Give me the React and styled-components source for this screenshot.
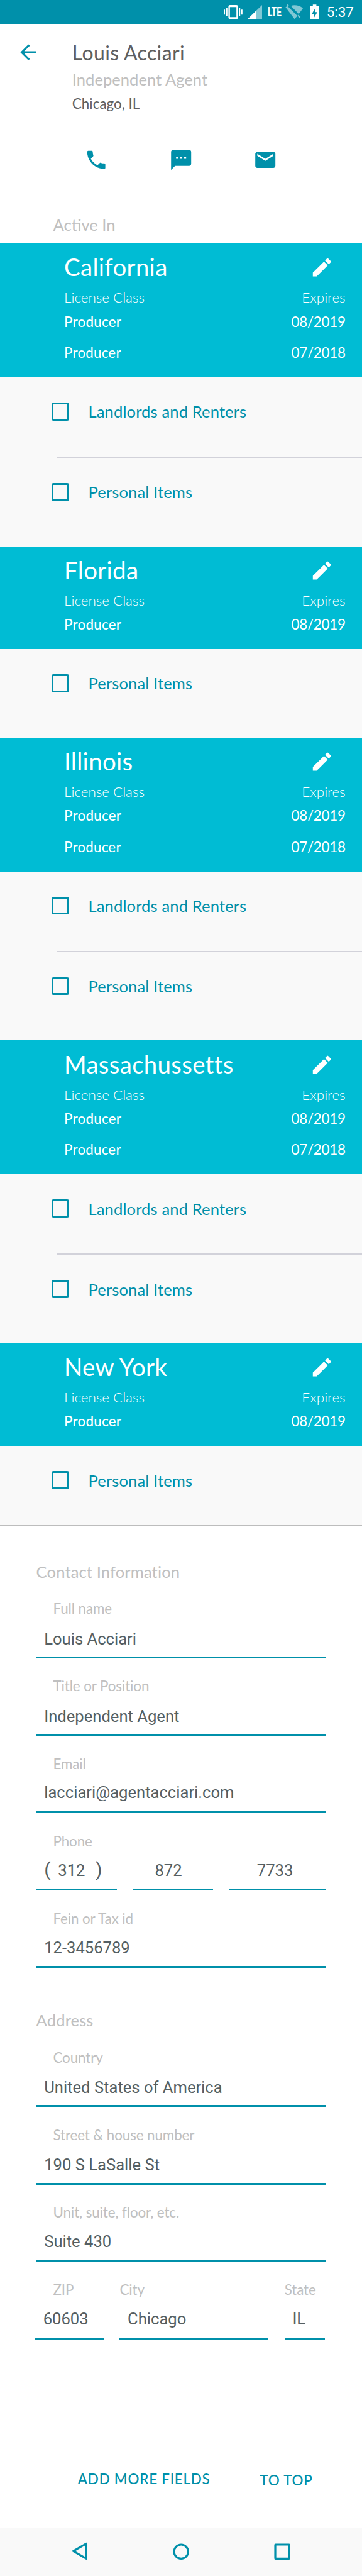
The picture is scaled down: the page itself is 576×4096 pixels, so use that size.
import React from "react";
import styled, { createGlobalStyle } from "styled-components";

// The screen is laid out on a 360dp wide grid.
const dp = (n) => `${Math.round(n * 1600) / 1000}px`;

const teal = "#0090aa";
const cyan = "#00bcd4";
const grey = "#c0c0c0";
const lato = `Lato, "Open Sans", sans-serif`;
const roboto = `Roboto, "Liberation Sans", sans-serif`;

const GlobalStyle = createGlobalStyle`
  * { box-sizing: border-box; }
  body { margin: 0; background: #fff; }
`;

const Screen = styled.div`
  width: 100%;
  height: ${dp(2560)};
  display: flex;
  flex-direction: column;
  background: #fff;
  font-family: ${lato};
  overflow: hidden;
`;

const StatusBar = styled.header`
  flex: none;
  height: ${dp(24)};
  background: ${teal};
  display: flex;
  align-items: center;
  justify-content: flex-end;
  padding-right: ${dp(8.25)};
  color: #fff;
  font-family: ${roboto};
  svg { flex: none; display: block; }
`;

const Network = styled.span`
  flex: none;
  width: ${dp(17.4)};
  margin-left: ${dp(5.4)};
  font-size: ${dp(12.6)};
  line-height: ${dp(24)};
  font-weight: 700;
  transform: scaleX(0.67);
  transform-origin: left center;
`;

const Battery = styled.span`
  flex: none;
  margin-left: ${dp(7.2)};
`;

const Clock = styled.time`
  font-size: ${dp(14)};
  line-height: ${dp(24)};
  margin-left: ${dp(7)};
`;

const Profile = styled.section`
  flex: none;
  height: ${dp(218)};
  padding: ${dp(12)} 0 0 ${dp(16)};
`;

const ProfileTop = styled.div`
  display: flex;
  gap: ${dp(31.8)};
  height: ${dp(94)};
  padding-top: ${dp(4)};
  svg { flex: none; display: block; }
`;

const Identity = styled.div`
  margin-top: ${dp(-0.6)};
`;

const Line = styled.div`
  font-size: ${(p) => dp(p.$size)};
  line-height: ${(p) => dp(p.$line)};
  letter-spacing: ${(p) => dp(p.$spacing || 0)};
  color: ${(p) => p.$color};
  white-space: nowrap;
`;

const Actions = styled.div`
  display: flex;
  gap: ${dp(60)};
  padding: ${dp(17)} 0 0 ${dp(68)};
  svg { display: block; }
`;

const ActiveHeading = styled.h2`
  margin: ${dp(41.9)} 0 0 ${dp(36.8)};
  font-size: ${dp(16)};
  line-height: ${dp(20)};
  font-weight: 400;
  color: ${grey};
`;

const StateBanner = styled.div`
  height: ${(p) => dp(71 + p.$rows * 31)};
  padding: ${dp(12)} ${dp(16.5)} 0 ${dp(63.8)};
  background: ${cyan};
  color: #fff;
`;

const StateTitle = styled.div`
  display: flex;
  justify-content: space-between;
  height: ${dp(31.85)};
  padding-right: ${dp(11.5)};
  font-size: ${dp(24)};
  line-height: ${dp(23.5)};
  letter-spacing: ${dp(0.2)};
  svg { display: block; }
`;

const LicenseRow = styled.div`
  display: flex;
  justify-content: space-between;
  height: ${(p) => dp(p.$header ? 24 : 31)};
  font-size: ${dp(14)};
  line-height: ${dp(20)};
  font-weight: ${(p) => (p.$header ? 300 : 400)};
`;

const LicenseName = styled.span`
  font-weight: ${(p) => (p.$current ? 500 : 400)};
  letter-spacing: ${dp(0.12)};
`;

const LicenseDate = styled.span`
  letter-spacing: ${dp(-0.18)};
`;

const Options = styled.ul`
  margin: 0;
  height: ${(p) => dp(p.$last ? 80 : 8 + p.$count * 80)};
  padding: 0;
  list-style: none;
  background: #f9f9f9;
  border-bottom: ${(p) => (p.$last ? "2px solid #bdbdbd" : "none")};
`;

const Option = styled.li`
  height: ${(p) => dp(p.$last ? 78 : 80)};
  margin-left: ${dp(56)};
  border-bottom: ${(p) => (p.$last ? "none" : "2px solid #d2d2da")};
`;

const OptionLabel = styled.label`
  display: flex;
  align-items: center;
  gap: ${dp(18.8)};
  height: ${dp(68)};
  margin-left: ${dp(-5)};
  font-size: ${dp(16)};
  letter-spacing: ${dp(0.07)};
  color: ${teal};
`;

const Box = styled.span`
  flex: none;
  width: ${dp(18)};
  height: ${dp(18)};
  border: ${dp(2)} solid ${teal};
  border-radius: ${dp(2)};
`;

const FormGroup = styled.section`
  flex: none;
  height: ${(p) => dp(p.$height)};
  padding: 0 ${dp(36)};
`;

const FormHeading = styled.h2`
  margin: 0;
  height: ${(p) => dp(p.$height)};
  padding-top: ${(p) => dp(p.$top)};
  font-size: ${dp(16)};
  line-height: ${dp(20)};
  font-weight: 400;
  letter-spacing: ${dp(0.07)};
  color: ${grey};
`;

const Row = styled.div`
  display: flex;
  gap: ${dp(16)};
  margin-left: ${(p) => dp(p.$shift || 0)};
`;

const FieldBox = styled.div`
  flex: none;
  width: ${(p) => dp(p.$width || 288)};
  height: ${dp(77)};
  display: flex;
  flex-direction: column;
  border-bottom: ${dp(2)} solid ${teal};
`;

const FieldLabel = styled.span`
  height: ${dp(38)};
  padding: ${dp(17.9)} 0 0 ${(p) => dp(p.$indent)};
  font-size: ${dp(14)};
  line-height: ${dp(20)};
  letter-spacing: ${dp(-0.07)};
  color: ${grey};
  white-space: nowrap;
`;

const FieldValue = styled.span`
  display: flex;
  align-items: baseline;
  padding-left: ${(p) => dp(p.$indent)};
  margin-top: ${(p) => dp(p.$raised ? 8.6 : 9.5)};
  font-family: ${roboto};
  font-size: ${dp(16)};
  line-height: ${dp(20)};
  color: #555f63;
  white-space: pre;
`;

const Paren = styled.span`
  width: ${(p) => dp(p.$width)};
  font-size: ${dp(19)};
  line-height: ${dp(18)};
  text-align: ${(p) => p.$align || "left"};
`;

const Footer = styled.div`
  flex: none;
  height: ${dp(187)};
  display: flex;
  align-items: flex-start;
  padding: ${dp(128.8)} 0 0 ${dp(77.4)};
  gap: ${dp(49.2)};
`;

const TextButton = styled.button`
  padding: 0;
  border: 0;
  margin: ${(p) => dp(p.$drop || 0)} 0 0;
  background: none;
  font-family: ${lato};
  font-size: ${dp(14)};
  line-height: ${dp(20)};
  font-weight: 500;
  letter-spacing: ${dp(0.48)};
  color: ${teal};
  white-space: nowrap;
`;

const NavBar = styled.nav`
  flex: none;
  height: ${dp(48)};
  display: flex;
  justify-content: center;
  align-items: center;
  gap: ${dp(77)};
  background: #f9f9f9;
  svg { display: block; }
`;

const Icon = ({ d, color = teal }) => (
  <svg width="38.4" height="38.4" viewBox="0 0 24 24" fill={color}>
    <path d={d} />
  </svg>
);

const paths = {
  back: "M20 11H7.83l5.59-5.59L12 4l-8 8 8 8 1.41-1.41L7.83 13H20v-2z",
  phone:
    "M6.62 10.79c1.44 2.83 3.76 5.14 6.59 6.59l2.2-2.2c.27-.27.67-.36 1.02-.24 1.12.37 2.33.57 3.57.57.55 0 1 .45 1 1V20c0 .55-.45 1-1 1-9.39 0-17-7.61-17-17 0-.55.45-1 1-1h3.5c.55 0 1 .45 1 1 0 1.25.2 2.45.57 3.57.11.35.03.74-.25 1.02l-2.2 2.2z",
  sms: "M20 2H4c-1.1 0-1.99.9-1.99 2L2 22l4-4h14c1.1 0 2-.9 2-2V4c0-1.1-.9-2-2-2zM9 11H7V9h2v2zm4 0h-2V9h2v2zm4 0h-2V9h2v2z",
  mail: "M20 4H4c-1.1 0-1.99.9-1.99 2L2 18c0 1.1.9 2 2 2h16c1.1 0 2-.9 2-2V6c0-1.1-.9-2-2-2zm0 4l-8 5-8-5V6l8 5 8-5v2z",
  edit: "M3 17.25V21h3.75L17.81 9.94l-3.75-3.75L3 17.25zM20.71 7.04c.39-.39.39-1.02 0-1.41l-2.34-2.34c-.39-.39-1.02-.39-1.41 0l-1.83 1.83 3.75 3.75 1.83-1.83z",
};

const VibrateSignalIcons = () => (
  <svg width="64" height="38.4" viewBox="0 0 80 48" fill="#fff">
    <path d="M4 19h2.300v10H4zM8.500 16H11v16H8.500zM34 16h2.500v16H34zM38.700 19H41v10h-2.300z" />
    <path
      fillRule="evenodd"
      d="M16 10h13a3 3 0 0 1 3 3v22a3 3 0 0 1-3 3H16a3 3 0 0 1-3-3V13a3 3 0 0 1 3-3zm0 4v20h13V14z"
    />
    <path d="M80 10v28H68V21.600z" opacity=".5" />
    <path d="M68 21.600V38H51z" />
  </svg>
);

const WifiOffIcon = () => (
  <svg width="28" height="38.4" viewBox="0 0 35 48" fill="#fff" opacity=".5">
    <path d="M11 11.500C19 8.800 29 11 35 16.500L26.700 27.700z" />
    <path d="M.500 14.500L4 11.800 24 31.500 18.300 37.800z" />
    <path d="M4.600 8.300L2.700 10.200 5 12.500l2-1.700zM24 31.500l4.300 4.200 2-2L26 29.300z" />
  </svg>
);

const BatteryIcon = () => (
  <svg width="15.2" height="38.4" viewBox="0 0 19 48" fill="#fff">
    <path
      fillRule="evenodd"
      d="M6 9h7v3h4a2 2 0 0 1 2 2v22a2 2 0 0 1-2 2H2a2 2 0 0 1-2-2V14a2 2 0 0 1 2-2h4zM10.500 17L4 27.500h4.500V35L15 24h-4.500z"
    />
  </svg>
);

const NavIcon = ({ children }) => (
  <svg
    width="38.4"
    height="38.4"
    viewBox="0 0 48 48"
    fill="none"
    stroke={teal}
    strokeWidth="4"
    strokeLinejoin="round"
  >
    {children}
  </svg>
);

const states = [
  { name: "California", expires: ["08/2019", "07/2018"], items: ["Landlords and Renters", "Personal Items"] },
  { name: "Florida", expires: ["08/2019"], items: ["Personal Items"] },
  { name: "Illinois", expires: ["08/2019", "07/2018"], items: ["Landlords and Renters", "Personal Items"] },
  { name: "Massachussetts", expires: ["08/2019", "07/2018"], items: ["Landlords and Renters", "Personal Items"] },
  { name: "New York", expires: ["08/2019"], items: ["Personal Items"] },
];

const StateSection = ({ state, last }) => (
  <section>
    <StateBanner $rows={state.expires.length}>
      <StateTitle>
        <span>{state.name}</span>
        <Icon d={paths.edit} color="#fff" />
      </StateTitle>
      <LicenseRow $header>
        <span>License Class</span>
        <span>Expires</span>
      </LicenseRow>
      {state.expires.map((date, i) => (
        <LicenseRow key={date}>
          <LicenseName $current={i === 0}>Producer</LicenseName>
          <LicenseDate>{date}</LicenseDate>
        </LicenseRow>
      ))}
    </StateBanner>
    <Options $last={last} $count={state.items.length}>
      {state.items.map((item, i) => (
        <Option key={item} $last={i === state.items.length - 1}>
          <OptionLabel>
            <Box />
            {item}
          </OptionLabel>
        </Option>
      ))}
    </Options>
  </section>
);

const Field = ({ label, labelIndent = 16.8, indent = 7.9, width, raised, children }) => (
  <FieldBox $width={width}>
    <FieldLabel $indent={labelIndent}>{label}</FieldLabel>
    <FieldValue $indent={indent} $raised={raised}>
      {children}
    </FieldValue>
  </FieldBox>
);

export default function App() {
  return (
    <>
      <GlobalStyle />
      <Screen>
        <StatusBar>
          <VibrateSignalIcons />
          <Network>LTE</Network>
          <WifiOffIcon />
          <Battery>
            <BatteryIcon />
          </Battery>
          <Clock>5:37</Clock>
        </StatusBar>
        <Profile>
          <ProfileTop>
            <Icon d={paths.back} />
            <Identity>
              <Line $size={20} $line={26} $spacing={0.23} $color="#5f5f5f">Louis Acciari</Line>
              <Line $size={16} $line={27} $color={grey}>Independent Agent</Line>
              <Line $size={14} $line={21} $color="#616161">Chicago, IL</Line>
            </Identity>
          </ProfileTop>
          <Actions>
            <Icon d={paths.phone} />
            <Icon d={paths.sms} />
            <Icon d={paths.mail} />
          </Actions>
          <ActiveHeading>Active In</ActiveHeading>
        </Profile>
        {states.map((state, i) => (
          <StateSection key={state.name} state={state} last={i === states.length - 1} />
        ))}
        <FormGroup $height={439}>
          <FormHeading $top={34.85} $height={54}>Contact Information</FormHeading>
          <Field label="Full name">Louis Acciari</Field>
          <Field label="Title or Position">Independent Agent</Field>
          <Field label="Email" raised>lacciari@agentacciari.com</Field>
          <Row>
            <Field label="Phone" width={80} raised>
              <Paren $width={13.8}>(</Paren>
              312
              <Paren $width={17} $align="right">)</Paren>
            </Field>
            <Field width={80} indent={22} raised>872</Field>
            <Field width={96} indent={27.5} raised>7733</Field>
          </Row>
          <Field label="Fein or Tax id" raised>12-3456789</Field>
        </FormGroup>
        <FormGroup $height={369}>
          <FormHeading $top={41.7} $height={61}>Address</FormHeading>
          <Field label="Country">United States of America</Field>
          <Field label="Street & house number">190 S LaSalle St</Field>
          <Field label="Unit, suite, floor, etc." raised>Suite 430</Field>
          <Row $shift={-1}>
            <Field label="ZIP" width={68} labelIndent={17.8} raised>60603</Field>
            <Field label="City" width={148} labelIndent={0} raised>Chicago</Field>
            <Field label="State" width={40} labelIndent={0} raised>IL</Field>
          </Row>
        </FormGroup>
        <Footer>
          <TextButton>ADD MORE FIELDS</TextButton>
          <TextButton $drop={1}>TO TOP</TextButton>
        </Footer>
        <NavBar>
          <NavIcon>
            <path d="M38 8v30L12 23z" />
          </NavIcon>
          <NavIcon>
            <circle cx="24" cy="24" r="14" />
          </NavIcon>
          <NavIcon>
            <rect x="10" y="10" width="28" height="28" rx="0.5" />
          </NavIcon>
        </NavBar>
      </Screen>
    </>
  );
}
